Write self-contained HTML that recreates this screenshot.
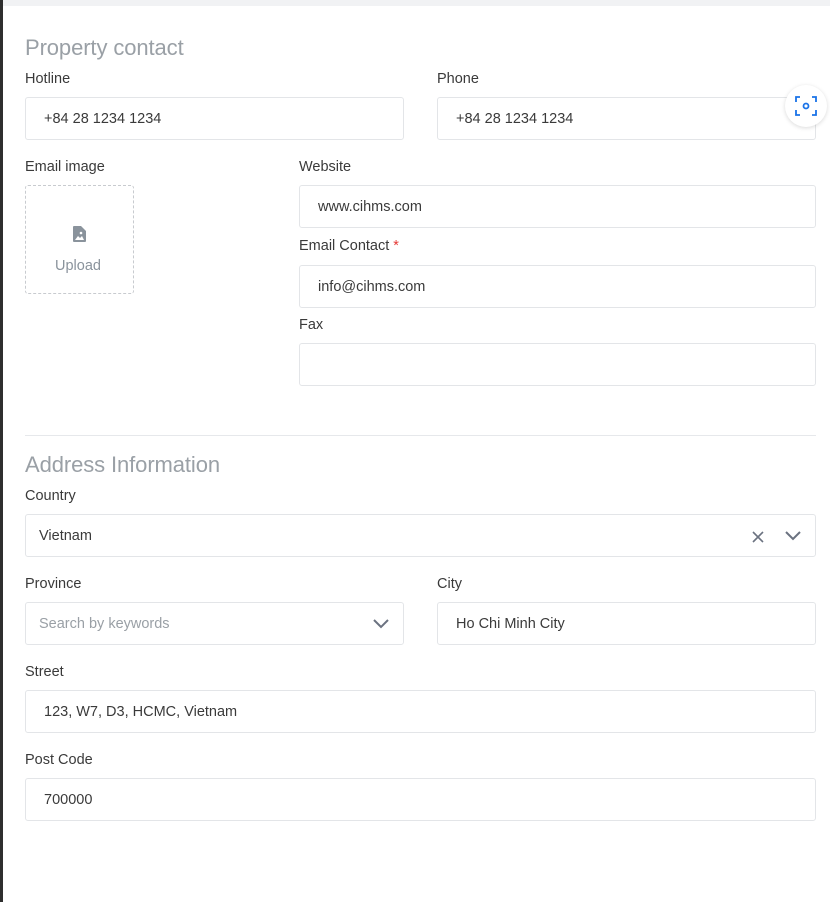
<!DOCTYPE html>
<html><head><style>
body{margin:0;width:830px;height:902px;background:#fff;position:relative;overflow:hidden;font-family:"Liberation Sans",sans-serif;color:#333;}
.l{position:absolute;font-size:14.5px;color:#3a3a3a;letter-spacing:0}
.i{position:absolute;box-sizing:border-box;border:1px solid #e3e5e8;border-radius:3px;height:43px;font-size:14.5px;color:#3a3a3a;line-height:43px;padding-left:18px;letter-spacing:0}
.h{position:absolute;font-size:22px;color:#9aa0a6;letter-spacing:-0.1px}
</style></head><body>
<div style="position:absolute;left:0;top:0;width:3px;height:902px;background:#2e2e2e"></div>
<div style="position:absolute;left:3px;top:0;width:827px;height:6px;background:#f1f2f4"></div>
<div class="h" style="left:25px;top:35px">Property contact</div>
<div class="l" style="left:25px;top:71px">Hotline</div>
<div class="l" style="left:437px;top:71px">Phone</div>
<div class="i" style="left:25px;top:97px;width:379px">+84 28 1234 1234</div>
<div class="i" style="left:437px;top:97px;width:379px">+84 28 1234 1234</div>
<div style="position:absolute;left:785px;top:85px;width:42px;height:42px;border-radius:50%;background:#fff;box-shadow:0 1px 4px rgba(0,0,0,.15)">
<svg width="42" height="42" viewBox="0 0 42 42" fill="none" stroke="#1a73e8" stroke-width="1.8"><path d="M11 17v-5h4M27 12h4v5M31 25v5h-4M15 30h-4v-5"/><circle cx="21" cy="21" r="2.5"/></svg></div>
<div class="l" style="left:25px;top:159px">Email image</div>
<div style="position:absolute;left:25px;top:185px;width:109px;height:109px;box-sizing:border-box;border:1px dashed #c8cbcf;border-radius:3px"></div>
<svg style="position:absolute;left:73px;top:226px" width="13" height="16" viewBox="0 0 13 16"><path d="M0 1a1 1 0 0 1 1-1h7l5 5v10a1 1 0 0 1-1 1H1a1 1 0 0 1-1-1z" fill="#8a939c"/><path d="M2 14l3-4 2 2 2-2 2 4z" fill="#fff"/><circle cx="8" cy="7" r="1.3" fill="#fff"/></svg>
<div class="l" style="left:55px;top:258px;color:#8a939c">Upload</div>
<div class="l" style="left:299px;top:159px">Website</div>
<div class="i" style="left:299px;top:185px;width:517px">www.cihms.com</div>
<div class="l" style="left:299px;top:238px">Email Contact <span style="color:#e53935">*</span></div>
<div class="i" style="left:299px;top:265px;width:517px">info@cihms.com</div>
<div class="l" style="left:299px;top:317px">Fax</div>
<div class="i" style="left:299px;top:343px;width:517px"></div>
<div style="position:absolute;left:25px;top:435px;width:791px;height:1px;background:#e6e8eb"></div>
<div class="h" style="left:25px;top:452px">Address Information</div>
<div class="l" style="left:25px;top:488px">Country</div>
<div class="i" style="left:25px;top:514px;width:791px;padding-left:13px">Vietnam</div>
<svg style="position:absolute;left:752px;top:531px" width="12" height="12" viewBox="0 0 12 12" stroke="#6b7280" stroke-width="1.6"><path d="M1 1l10 10M11 1L1 11"/></svg>
<svg style="position:absolute;left:785px;top:531px" width="16" height="10" viewBox="0 0 16 10" fill="none" stroke="#6b7280" stroke-width="2"><path d="M1 1l7 7 7-7"/></svg>
<div class="l" style="left:25px;top:576px">Province</div>
<div class="l" style="left:437px;top:576px">City</div>
<div class="i" style="left:25px;top:602px;width:379px;padding-left:13px;color:#9aa0a6">Search by keywords</div>
<svg style="position:absolute;left:373px;top:619px" width="16" height="10" viewBox="0 0 16 10" fill="none" stroke="#6b7280" stroke-width="2"><path d="M1 1l7 7 7-7"/></svg>
<div class="i" style="left:437px;top:602px;width:379px">Ho Chi Minh City</div>
<div class="l" style="left:25px;top:664px">Street</div>
<div class="i" style="left:25px;top:690px;width:791px">123, W7, D3, HCMC, Vietnam</div>
<div class="l" style="left:25px;top:752px">Post Code</div>
<div class="i" style="left:25px;top:778px;width:791px">700000</div>
</body></html>
